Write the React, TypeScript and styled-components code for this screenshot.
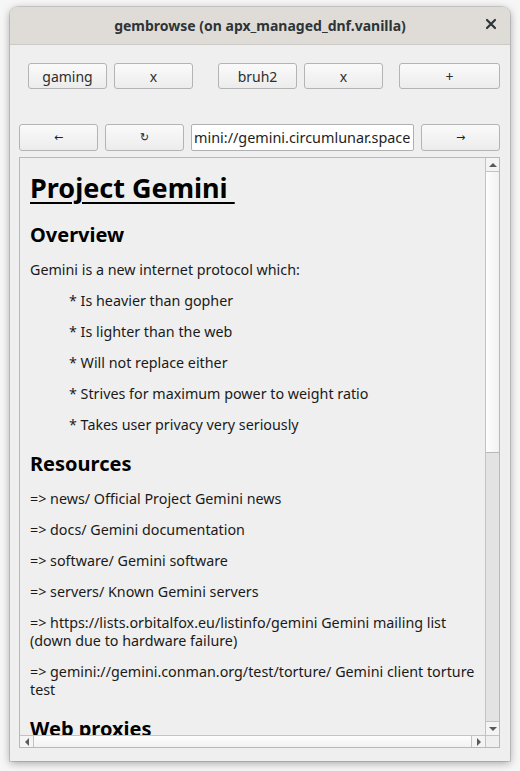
import React from "react";
import styled, { createGlobalStyle } from "styled-components";

const Global = createGlobalStyle`
  html, body { margin: 0; padding: 0; background: #f6f6f6; }
  body { font-family: "Noto Sans", "DejaVu Sans", sans-serif; }
`;

const Page = styled.div`
  width: 520px;
  height: 771px;
  padding: 7px 10px 0 10px;
  box-sizing: border-box;
  overflow: hidden;
`;

const Win = styled.div`
  width: 500px;
  height: 754px;
  border-radius: 8px 8px 0 0;
  background: #efefef;
  box-shadow: 0 2px 8px rgba(0,0,0,0.35), 0 0 0 1px rgba(0,0,0,0.12);
  display: flex;
  flex-direction: column;
  overflow: hidden;
`;

const TitleBar = styled.div`
  height: 37px;
  flex: none;
  background: #dfdcd8;
  border-bottom: 1px solid #cdc9c5;
  display: flex;
  align-items: center;
  justify-content: center;
  position: relative;
  font-weight: bold;
  font-size: 14px;
  color: #2e3436;
`;

const CloseX = styled.span`
  position: absolute;
  right: 12px;
  top: 10px;
  width: 14px;
  height: 14px;
  display: flex;
`;

const Body = styled.div`
  flex: 1;
  min-height: 0;
  display: flex;
  flex-direction: column;
  padding: 0 10px 13px 9px;
`;

const TabRow = styled.div`
  display: flex;
  flex: none;
  margin-top: 18px;
  padding-left: 9px;
  height: 26px;
`;

const NavRow = styled.div`
  display: flex;
  flex: none;
  margin-top: 35px;
  height: 27px;
  gap: 7px;
`;

const Btn = styled.button<{ $w: number; $ml?: number }>`
  width: ${(p) => p.$w}px;
  margin-left: ${(p) => p.$ml ?? 0}px;
  height: 100%;
  box-sizing: border-box;
  border: 1px solid #b4b4b4;
  border-radius: 3px;
  background: linear-gradient(#fafafa, #ececec);
  font-family: "Noto Sans", "DejaVu Sans", sans-serif;
  font-size: 14px;
  color: #2e2e2e;
  padding: 0;
  display: flex;
  align-items: center;
  justify-content: center;
`;

const Arrow = styled.span`
  font-family: "DejaVu Sans", sans-serif;
  font-size: 11px;
  color: #222;
`;

const UrlBox = styled.div`
  width: 223px;
  height: 100%;
  box-sizing: border-box;
  background: #fff;
  border: 1px solid #b0b0b0;
  border-radius: 2px;
  font-size: 14.4px;
  color: #1e1e1e;
  display: flex;
  align-items: center;
  padding-left: 2px;
  overflow: hidden;
  white-space: nowrap;
`;

const Pane = styled.div`
  margin-top: 6px;
  flex: 1;
  min-height: 0;
  border: 1px solid #b9b9b9;
  display: grid;
  grid-template-columns: minmax(0, 1fr) 14px;
  grid-template-rows: minmax(0, 1fr) 12px;
  background: #efefef;
  overflow: hidden;
`;

const Doc = styled.div`
  overflow: hidden;
  padding: 10px 10px 0 10px;
  color: #1a1a1a;
  font-size: 14.3px;
  min-height: 0;
`;

const H1 = styled.h1`
  margin: 4px 0 16px 0;
  font-size: 27px;
  font-weight: bold;
  color: #000;
  text-decoration: underline;
  text-underline-offset: 4px;
  text-decoration-thickness: 2px;
  line-height: 32px;
  white-space: pre;
`;

const H2 = styled.h2<{ $top?: number }>`
  margin: ${(p) => p.$top ?? 15}px 0 11px 0;
  font-size: 20px;
  font-weight: bold;
  color: #000;
  line-height: 30px;
`;

const P = styled.p<{ $indent?: boolean }>`
  margin: 0 0 13px 0;
  padding-left: ${(p) => (p.$indent ? 39 : 0)}px;
  line-height: 18px;
`;

const VBar = styled.div`
  display: grid;
  grid-template-rows: 14px 281px 1fr 14px;
  border-left: 1px solid #c3c3c3;
  min-height: 0;
`;

const HBar = styled.div`
  display: grid;
  grid-template-columns: 14px 1fr 14px;
  border-top: 1px solid #c3c3c3;
`;

const ArrowCell = styled.div<{ $side?: string }>`
  background: #f4f4f4;
  display: flex;
  align-items: center;
  justify-content: center;
  ${(p) => p.$side === "b" ? "border-bottom: 1px solid #c3c3c3;" : ""}
  ${(p) => p.$side === "t" ? "border-top: 1px solid #c3c3c3;" : ""}
  ${(p) => p.$side === "r" ? "border-right: 1px solid #c3c3c3;" : ""}
  ${(p) => p.$side === "l" ? "border-left: 1px solid #c3c3c3;" : ""}
`;

const Thumb = styled.div`
  background: linear-gradient(90deg, #fdfdfd, #f2f2f2);
  border-bottom: 1px solid #b8b8b8;
`;

const Track = styled.div`
  background: #e3e3e3;
`;

const HThumb = styled.div`
  background: linear-gradient(#fdfdfd, #f2f2f2);
`;

const Corner = styled.div`
  background: #efefef;
  border-left: 1px solid #c3c3c3;
  border-top: 1px solid #c3c3c3;
`;

const Tri = ({ dir }: { dir: "up" | "down" | "left" | "right" }) => {
  const pts = {
    up: "0,5 8,5 4,1",
    down: "0,1 8,1 4,5",
    left: "5,0 5,8 1,4",
    right: "1,0 1,8 5,4",
  }[dir];
  const vertical = dir === "up" || dir === "down";
  return (
    <svg width={vertical ? 8 : 6} height={vertical ? 6 : 8} viewBox={vertical ? "0 0 8 6" : "0 0 6 8"}>
      <polygon points={pts} fill="#5a5a5a" />
    </svg>
  );
};

const links = [
  "=> news/ Official Project Gemini news",
  "=> docs/ Gemini documentation",
  "=> software/ Gemini software",
  "=> servers/ Known Gemini servers",
  "=> https://lists.orbitalfox.eu/listinfo/gemini Gemini mailing list (down due to hardware failure)",
  "=> gemini://gemini.conman.org/test/torture/ Gemini client torture test",
];

const bullets = [
  "* Is heavier than gopher",
  "* Is lighter than the web",
  "* Will not replace either",
  "* Strives for maximum power to weight ratio",
  "* Takes user privacy very seriously",
];

export default function App() {
  return (
    <Page>
      <Global />
      <Win>
        <TitleBar>
          gembrowse (on apx_managed_dnf.vanilla)
          <CloseX>
            <svg width="14" height="14" viewBox="0 0 14 14">
              <path d="M3 3 L11 11 M11 3 L3 11" stroke="#2e3436" strokeWidth="2.2" strokeLinecap="round" />
            </svg>
          </CloseX>
        </TitleBar>
        <Body>
          <TabRow>
            <Btn $w={79}>gaming</Btn>
            <Btn $w={79} $ml={7}>x</Btn>
            <Btn $w={79} $ml={25}>bruh2</Btn>
            <Btn $w={79} $ml={7}>x</Btn>
            <Btn $w={101} $ml={16}>+</Btn>
          </TabRow>
          <NavRow>
            <Btn $w={79}><Arrow>←</Arrow></Btn>
            <Btn $w={79}><Arrow>↻</Arrow></Btn>
            <UrlBox>mini://gemini.circumlunar.space</UrlBox>
            <Btn $w={79}><Arrow>→</Arrow></Btn>
          </NavRow>
          <Pane>
            <Doc>
              <H1>Project Gemini </H1>
              <H2 $top={0}>Overview</H2>
              <P>Gemini is a new internet protocol which:</P>
              {bullets.map((b) => (
                <P $indent key={b}>{b}</P>
              ))}
              <H2>Resources</H2>
              {links.map((l) => (
                <P key={l}>{l}</P>
              ))}
              <H2 $top={15}>Web proxies</H2>
            </Doc>
            <VBar>
              <ArrowCell $side="b"><Tri dir="up" /></ArrowCell>
              <Thumb />
              <Track />
              <ArrowCell $side="t"><Tri dir="down" /></ArrowCell>
            </VBar>
            <HBar>
              <ArrowCell $side="r"><Tri dir="left" /></ArrowCell>
              <HThumb />
              <ArrowCell $side="l"><Tri dir="right" /></ArrowCell>
            </HBar>
            <Corner />
          </Pane>
        </Body>
      </Win>
    </Page>
  );
}
